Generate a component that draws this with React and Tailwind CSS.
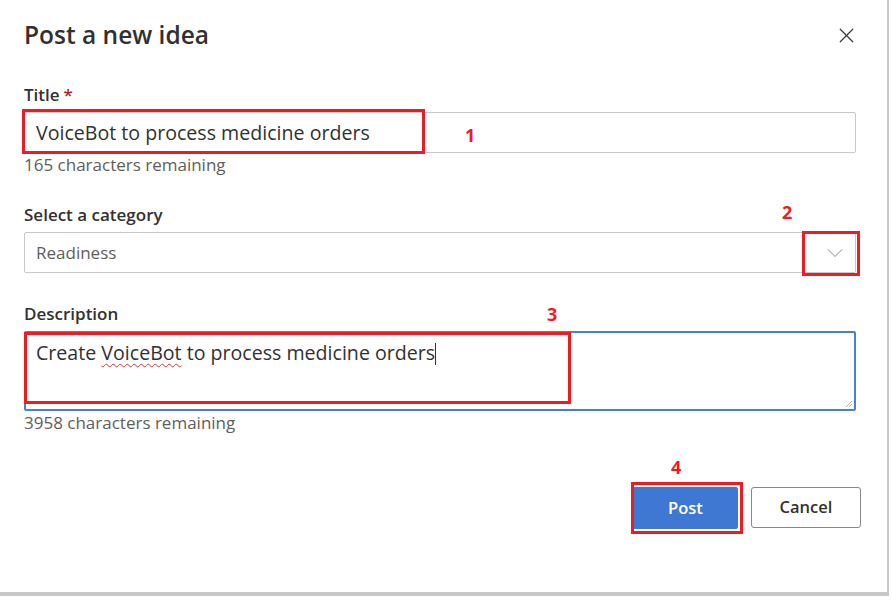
import { X, ChevronDown } from 'lucide-react';

const font = { fontFamily: '"Open Sans", "Noto Sans", sans-serif' };

function Field({ label, required, children, helper }) {
  return (
    <div>
      <div className="h-[22px] text-[17px] leading-[22px] font-semibold text-[#323130]">
        {label}
        {required && <span className="ml-1 text-[#a4262c]">*</span>}
      </div>
      <div className="mt-[6px]">{children}</div>
      {helper && (
        <div className="mt-[1px] text-[17px] leading-[22px] text-[#605e5c]">{helper}</div>
      )}
    </div>
  );
}

function Mark({ n, className }) {
  return <div className={`absolute text-[18px] leading-[20px] font-bold text-[#ec1c24] ${className}`}>{n}</div>;
}

export default function App() {
  return (
    <div className="w-[892px] h-[601px] bg-white" style={font}>
      <div className="relative w-[889px] h-[596px] bg-white border-r-[2px] border-b-[4px] border-[#c6c6c6] px-6 pt-[17px]">
        {/* Header */}
        <div className="flex items-center justify-between h-[36px]">
          <h1 className="text-[24.5px] leading-[36px] font-semibold text-[#323130]">Post a new idea</h1>
          <X size={25} strokeWidth={1.2} className="mr-[4px] text-[#3b3b3b]" />
        </div>

        <div className="mt-[31px] w-[832px]">
          <Field label="Title" required helper="165 characters remaining">
            <div className="h-[41px] border border-[#c8c8c8] rounded-[2px] px-[11px] flex items-center text-[19.6px] text-[#323130]">
              VoiceBot to process medicine orders
            </div>
          </Field>

          <div className="mt-[28px]">
            <Field label="Select a category">
              <div className="h-[41px] border border-[#c8c8c8] rounded-[2px] pl-[11px] pr-[6px] flex items-center justify-between text-[17px] text-[#605e5c]">
                <span>Readiness</span>
                <ChevronDown size={28} strokeWidth={0.9} className="text-[#a8a8a8]" />
              </div>
            </Field>
          </div>

          <div className="mt-[30px]">
            <Field label="Description" helper="3958 characters remaining">
              <div className="relative h-[80px] border-[2px] border-[#4a7fd6] rounded-[2px] px-[10px] pt-[7px] text-[19.6px] leading-[26px] text-[#323130]">
                Create{' '}
                <span className="underline decoration-wavy decoration-[#d13438] decoration-1 underline-offset-[3px]">VoiceBot</span>{' '}
                to process medicine orders
                <span className="inline-block w-[1px] h-[22px] bg-[#323130] align-middle -mt-[2px]" />
                <svg className="absolute right-[1px] bottom-[1px]" width="9" height="9" viewBox="0 0 9 9">
                  <path d="M8 2 L2 8 M8 5 L5 8" stroke="#b0b0b0" strokeWidth="1" />
                </svg>
              </div>
            </Field>
          </div>

          {/* Buttons */}
          <div className="mt-[53px] flex justify-end gap-[13px] -mr-[5px]">
            <button className="w-[105px] h-[42px] rounded-[2px] bg-[#3f78d3] text-white text-[16.5px] font-semibold">Post</button>
            <button className="w-[110px] h-[41px] rounded-[3px] border border-[#8a8886] bg-white text-[#323130] text-[16.5px] font-semibold">Cancel</button>
          </div>
        </div>

        {/* Annotations */}
        <div className="absolute left-[22px] top-[109px] w-[403px] h-[45px] border-[3px] border-[#ec1c24]" />
        <Mark n="1" className="left-[465px] top-[125px]" />
        <div className="absolute left-[802px] top-[231px] w-[58px] h-[45px] border-[3px] border-[#ec1c24]" />
        <Mark n="2" className="left-[782px] top-[202px]" />
        <div className="absolute left-[24px] top-[332px] w-[547px] h-[72px] border-[3px] border-[#ec1c24]" />
        <Mark n="3" className="left-[547px] top-[304px]" />
        <div className="absolute left-[631px] top-[482px] w-[112px] h-[52px] border-[3px] border-[#ec1c24]" />
        <Mark n="4" className="left-[671px] top-[457px]" />
      </div>
    </div>
  );
}
